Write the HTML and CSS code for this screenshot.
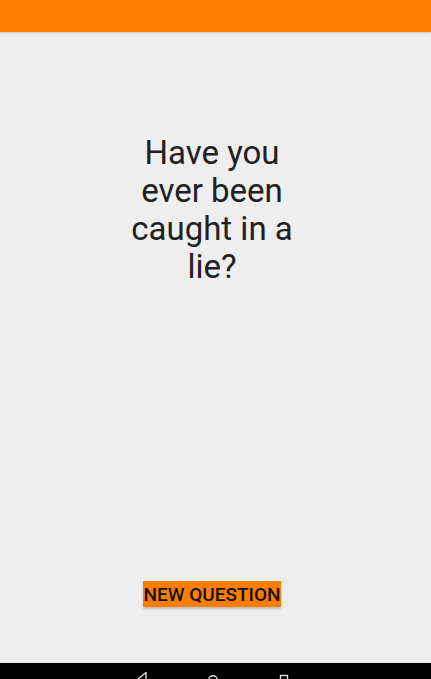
FILE: index.html
```html
<!DOCTYPE html>
<html>
<head>
<meta charset="utf-8">
<link rel="stylesheet" href="styles.css">
</head>
<body>
<div class="screen">
  <header class="appbar"></header>
  <main class="content">
    <p class="question">Have you ever been caught in a lie?</p>
    <button class="btn">NEW QUESTION</button>
  </main>
  <nav class="navbar">
    <svg class="nav-icon" width="12" height="10" viewBox="0 0 12 10"><path d="M10 1.5 L2.5 7.5 L10 13.5 Z" fill="none" stroke="#ddd" stroke-width="1.4" stroke-linejoin="round"/></svg>
    <svg class="nav-icon" width="12" height="10" viewBox="0 0 12 10"><circle cx="6" cy="9" r="4.3" fill="none" stroke="#ddd" stroke-width="1.4"/></svg>
    <svg class="nav-icon" width="12" height="10" viewBox="0 0 12 10"><rect x="2.5" y="4.5" width="7" height="9" fill="none" stroke="#ddd" stroke-width="1.4"/></svg>
  </nav>
</div>
</body>
</html>
```
FILE: styles.css
```css
html, body {
  margin: 0;
  padding: 0;
  background: #eeeeee;
}
.screen {
  width: 431px;
  height: 679px;
  display: flex;
  flex-direction: column;
  overflow: hidden;
  font-family: Roboto, "Noto Sans", sans-serif;
}
.appbar {
  height: 32px;
  flex: none;
  background: #ff7d00;
  box-shadow: 0 1px 2px rgba(0,0,0,0.18);
  position: relative;
  z-index: 1;
}
.content {
  flex: 1;
  display: flex;
  flex-direction: column;
  align-items: center;
}
.question {
  margin: 102px 0 0 -7px;
  width: 180px;
  text-align: center;
  font-size: 33px;
  line-height: 38px;
  color: #212121;
}
.btn {
  margin-top: auto;
  margin-bottom: 56px;
  margin-left: -7px;
  width: 138px;
  height: 26px;
  padding: 0;
  border: none;
  border-radius: 0;
  background: #ff7d00;
  color: #111;
  font-family: Roboto, sans-serif;
  font-weight: 500;
  font-size: 19px;
  box-shadow: 0 2px 2px rgba(0,0,0,0.2);
}
.navbar {
  height: 16px;
  flex: none;
  background: #000;
  display: flex;
  justify-content: center;
  align-items: flex-end;
  gap: 59px;
  padding-right: 5px;
}
.nav-icon {
  display: block;
  margin-bottom: -2px;
}
```
